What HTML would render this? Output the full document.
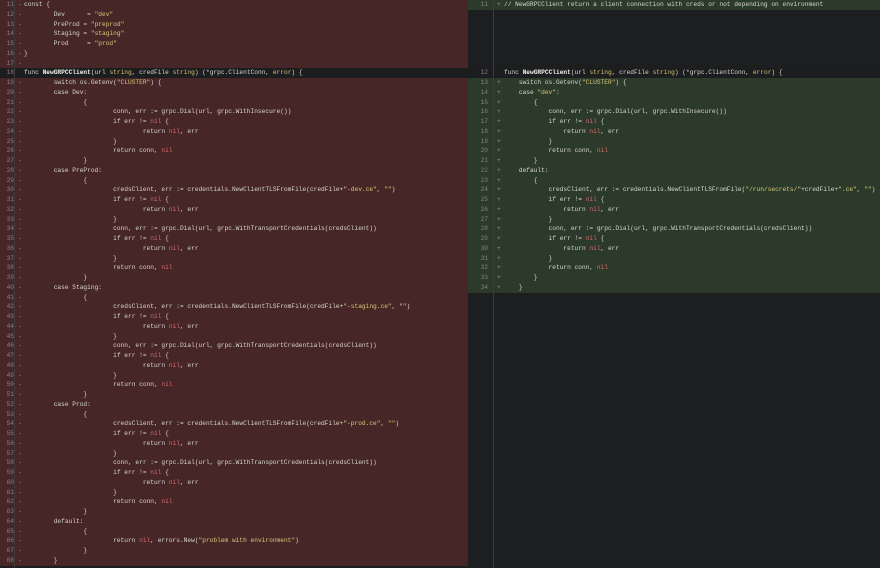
<!DOCTYPE html>
<html><head><meta charset="utf-8"><style>
html,body{margin:0;padding:0;width:880px;height:568px;overflow:hidden;background:#1d1e20;}
.p{position:absolute;top:0;height:568px;}
.r{position:absolute;height:9.75px;line-height:9.75px;font-family:"Liberation Mono",monospace;font-size:6.2px;color:#d6d6cf;white-space:pre;tab-size:8;-moz-tab-size:8;}
.d{background:#472628;}
.a{background:#2c3a2b;}
.u{background:#1c1d1f;}
.num{position:absolute;width:14px;text-align:right;color:#8a7f80;}
.mk{position:absolute;color:#9a8a8a;}
.c{position:absolute;}
.s{color:#d8c878;}
.n{color:#d86a6a;}
.t{color:#d9c06e;}
.b{font-weight:bold;color:#f0f0ea;}
.bl{position:absolute;top:0;width:1px;height:568px;background:#3a3b3d;}
</style></head><body>
<div class="p" style="left:0;width:468px;" id="L"></div>
<div class="p" style="left:468px;width:412px;" id="R"></div>
<div class="bl" style="left:14px;"></div>
<div class="bl" style="left:493px;"></div>
<script>
var L=[
['d','const {'],
['d','\tDev      = <span class="s">"dev"</span>'],
['d','\tPreProd = <span class="s">"preprod"</span>'],
['d','\tStaging = <span class="s">"staging"</span>'],
['d','\tProd     = <span class="s">"prod"</span>'],
['d','}'],
['d',''],
['u','func <span class="b">NewGRPCClient</span>(url <span class="t">string</span>, credFile <span class="t">string</span>) (*grpc.ClientConn, <span class="t">error</span>) {'],
['d','\tswitch os.Getenv(<span class="s">"CLUSTER"</span>) {'],
['d','\tcase Dev:'],
['d','\t\t{'],
['d','\t\t\tconn, err := grpc.Dial(url, grpc.WithInsecure())'],
['d','\t\t\tif err != <span class="n">nil</span> {'],
['d','\t\t\t\treturn <span class="n">nil</span>, err'],
['d','\t\t\t}'],
['d','\t\t\treturn conn, <span class="n">nil</span>'],
['d','\t\t}'],
['d','\tcase PreProd:'],
['d','\t\t{'],
['d','\t\t\tcredsClient, err := credentials.NewClientTLSFromFile(credFile+<span class="s">"-dev.ce"</span>, <span class="s">""</span>)'],
['d','\t\t\tif err != <span class="n">nil</span> {'],
['d','\t\t\t\treturn <span class="n">nil</span>, err'],
['d','\t\t\t}'],
['d','\t\t\tconn, err := grpc.Dial(url, grpc.WithTransportCredentials(credsClient))'],
['d','\t\t\tif err != <span class="n">nil</span> {'],
['d','\t\t\t\treturn <span class="n">nil</span>, err'],
['d','\t\t\t}'],
['d','\t\t\treturn conn, <span class="n">nil</span>'],
['d','\t\t}'],
['d','\tcase Staging:'],
['d','\t\t{'],
['d','\t\t\tcredsClient, err := credentials.NewClientTLSFromFile(credFile+<span class="s">"-staging.ce"</span>, <span class="s">""</span>)'],
['d','\t\t\tif err != <span class="n">nil</span> {'],
['d','\t\t\t\treturn <span class="n">nil</span>, err'],
['d','\t\t\t}'],
['d','\t\t\tconn, err := grpc.Dial(url, grpc.WithTransportCredentials(credsClient))'],
['d','\t\t\tif err != <span class="n">nil</span> {'],
['d','\t\t\t\treturn <span class="n">nil</span>, err'],
['d','\t\t\t}'],
['d','\t\t\treturn conn, <span class="n">nil</span>'],
['d','\t\t}'],
['d','\tcase Prod:'],
['d','\t\t{'],
['d','\t\t\tcredsClient, err := credentials.NewClientTLSFromFile(credFile+<span class="s">"-prod.ce"</span>, <span class="s">""</span>)'],
['d','\t\t\tif err != <span class="n">nil</span> {'],
['d','\t\t\t\treturn <span class="n">nil</span>, err'],
['d','\t\t\t}'],
['d','\t\t\tconn, err := grpc.Dial(url, grpc.WithTransportCredentials(credsClient))'],
['d','\t\t\tif err != <span class="n">nil</span> {'],
['d','\t\t\t\treturn <span class="n">nil</span>, err'],
['d','\t\t\t}'],
['d','\t\t\treturn conn, <span class="n">nil</span>'],
['d','\t\t}'],
['d','\tdefault:'],
['d','\t\t{'],
['d','\t\t\treturn <span class="n">nil</span>, errors.New(<span class="s">"problem with environment"</span>)'],
['d','\t\t}'],
['d','\t}']
];
var h='';
for(var i=0;i<L.length;i++){
 var k=L[i][0];
 h+='<div class="r '+k+'" style="top:'+(i*9.75)+'px;left:0;width:468px;"><span class="num" style="left:0">'+(11+i)+'</span>'+(k=='d'?'<span class="mk" style="left:18px">-</span>':'')+'<span class="c" style="left:24px">'+L[i][1]+'</span></div>';
}
document.getElementById('L').innerHTML=h;
var R=[
[0,11,'a','// NewGRPCClient return a client connection with creds or not depending on environment'],
[7,12,'u','func <span class="b">NewGRPCClient</span>(url <span class="t">string</span>, credFile <span class="t">string</span>) (*grpc.ClientConn, <span class="t">error</span>) {'],
[8,13,'a','    switch os.Getenv(<span class="s">"CLUSTER"</span>) {'],
[9,14,'a','    case <span class="s">"dev"</span>:'],
[10,15,'a','        {'],
[11,16,'a','            conn, err := grpc.Dial(url, grpc.WithInsecure())'],
[12,17,'a','            if err != <span class="n">nil</span> {'],
[13,18,'a','                return <span class="n">nil</span>, err'],
[14,19,'a','            }'],
[15,20,'a','            return conn, <span class="n">nil</span>'],
[16,21,'a','        }'],
[17,22,'a','    default:'],
[18,23,'a','        {'],
[19,24,'a','            credsClient, err := credentials.NewClientTLSFromFile(<span class="s">"/run/secrets/"</span>+credFile+<span class="s">".ce"</span>, <span class="s">""</span>)'],
[20,25,'a','            if err != <span class="n">nil</span> {'],
[21,26,'a','                return <span class="n">nil</span>, err'],
[22,27,'a','            }'],
[23,28,'a','            conn, err := grpc.Dial(url, grpc.WithTransportCredentials(credsClient))'],
[24,29,'a','            if err != <span class="n">nil</span> {'],
[25,30,'a','                return <span class="n">nil</span>, err'],
[26,31,'a','            }'],
[27,32,'a','            return conn, <span class="n">nil</span>'],
[28,33,'a','        }'],
[29,34,'a','    }']
];
h='';
for(var j=0;j<R.length;j++){
 var q=R[j];
 h+='<div class="r '+q[2]+'" style="top:'+(q[0]*9.75)+'px;left:0;width:412px;"><span class="num" style="left:6px">'+q[1]+'</span>'+(q[2]=='a'?'<span class="mk" style="left:29px">+</span>':'')+'<span class="c" style="left:36px">'+q[3]+'</span></div>';
}
document.getElementById('R').innerHTML=h;
</script>
</body></html>
